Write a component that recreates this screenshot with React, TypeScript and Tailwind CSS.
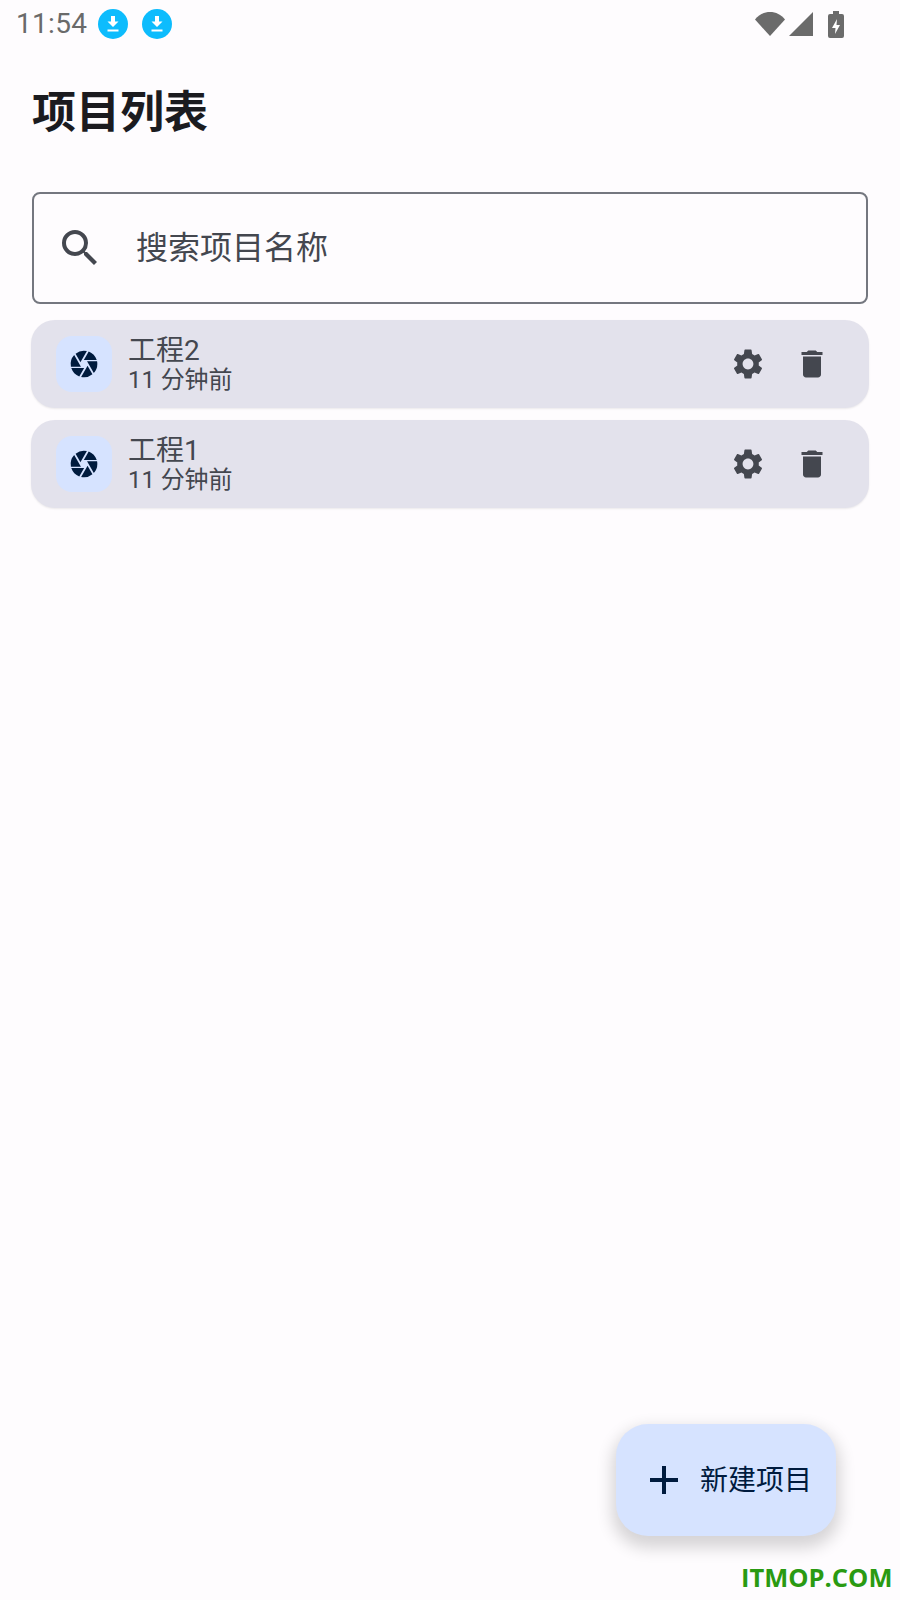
import React from 'react';
import { MdAdd, MdCamera, MdDelete, MdSearch, MdSettings } from 'react-icons/md';

const cjk = '[font-family:Roboto,"Noto_Sans_CJK_SC",sans-serif]';

const DownloadBadge = () => (
  <span className="flex h-[30px] w-[30px] items-center justify-center rounded-full bg-[#0dbcfd]">
    <svg width="14" height="16" viewBox="0 0 14 16" fill="white">
      <path d="M5 0h4v5.5h3.5L7 11 1.5 5.5H5z" />
      <rect x="1.5" y="13.5" width="11" height="2" />
    </svg>
  </span>
);

const StatusBar = () => (
  <div className="flex h-[48px] items-center pl-[16px] pr-[56px]">
    <span className="w-[72px] text-[28px] leading-[48px] tracking-[0.3px] text-[#6a6a6a] [font-family:Roboto,sans-serif]">11:54</span>
    <div className="ml-[10px] flex gap-[14px]">
      <DownloadBadge />
      <DownloadBadge />
    </div>
    <div className="ml-auto flex items-center">
      <svg width="30" height="26" viewBox="0 0 30 26" fill="#6b6b6b">
        <path d="M0 8.5C4 3.5 9 1 15 1s11 2.5 15 7.5L15 25z" />
      </svg>
      <svg className="ml-[3px]" width="26" height="26" viewBox="0 0 26 26" fill="#6b6b6b">
        <path d="M25 1v24H1z" />
      </svg>
      <svg className="ml-[14px]" width="16" height="27" viewBox="0 0 16 27">
        <path fill="#6b6b6b" d="M5 0h6v3h3a2 2 0 0 1 2 2v20a2 2 0 0 1-2 2H2a2 2 0 0 1-2-2V5a2 2 0 0 1 2-2h3z" />
        <path fill="white" d="M9 8l-5 9h3.5L7 23l5-9H8.5z" />
      </svg>
    </div>
  </div>
);

const ProjectRow = ({ name }: { name: string }) => (
  <div className="flex h-[88px] items-center rounded-[24px] bg-[#e3e2ec] pl-[25px] pr-[39px] shadow-[0_1px_2px_rgba(0,0,0,0.08)]">
    <div className="flex h-[56px] w-[56px] items-center justify-center rounded-[16px] bg-[#d6e3ff] text-[#001b3e]">
      <MdCamera size={32} />
    </div>
    <div className={`ml-[16px] mt-[2px] flex flex-col text-[#44474f] ${cjk}`}>
      <span className="text-[28px] leading-[30px]">{name}</span>
      <span className="text-[24px] leading-[29px] tracking-[-0.1px]">11 分钟前</span>
    </div>
    <div className="ml-auto flex items-center gap-[28px] text-[#44474f]">
      <MdSettings size={36} />
      <MdDelete size={36} />
    </div>
  </div>
);

const App = () => {
  return (
    <div className="relative h-[1600px] w-[900px] overflow-hidden bg-[#fefcfe]">
      <StatusBar />
      <h1 className={`ml-[32px] mt-[39px] text-[44px] font-bold leading-[52px] text-[#1b1b1f] ${cjk}`}>项目列表</h1>
      <div className="mx-[32px] mt-[53px] flex h-[112px] items-center rounded-[8px] border-2 border-[#74777f] pl-[22px]">
        <MdSearch size={48} className="text-[#44474f]" />
        <span className={`ml-[32px] text-[32px] text-[#44474f] ${cjk}`}>搜索项目名称</span>
      </div>
      <div className="mx-[31px] mt-[16px] flex flex-col gap-[12px]">
        <ProjectRow name="工程2" />
        <ProjectRow name="工程1" />
      </div>
      <div className="absolute left-[616px] top-[1424px] flex h-[112px] w-[220px] items-center rounded-[32px] bg-[#d6e3ff] pl-[24px] text-[#001b3e] shadow-[0_8px_16px_4px_rgba(0,0,0,0.16)]">
        <MdAdd size={48} />
        <span className={`ml-[12px] mt-[2px] text-[28px] ${cjk}`}>新建项目</span>
      </div>
      <span className="absolute left-[741px] top-[1559px] text-[25.5px] font-bold leading-[36px] text-[#2a9a12] [font-family:'Open_Sans',sans-serif]">ITMOP.COM</span>
    </div>
  );
};

export default App;
